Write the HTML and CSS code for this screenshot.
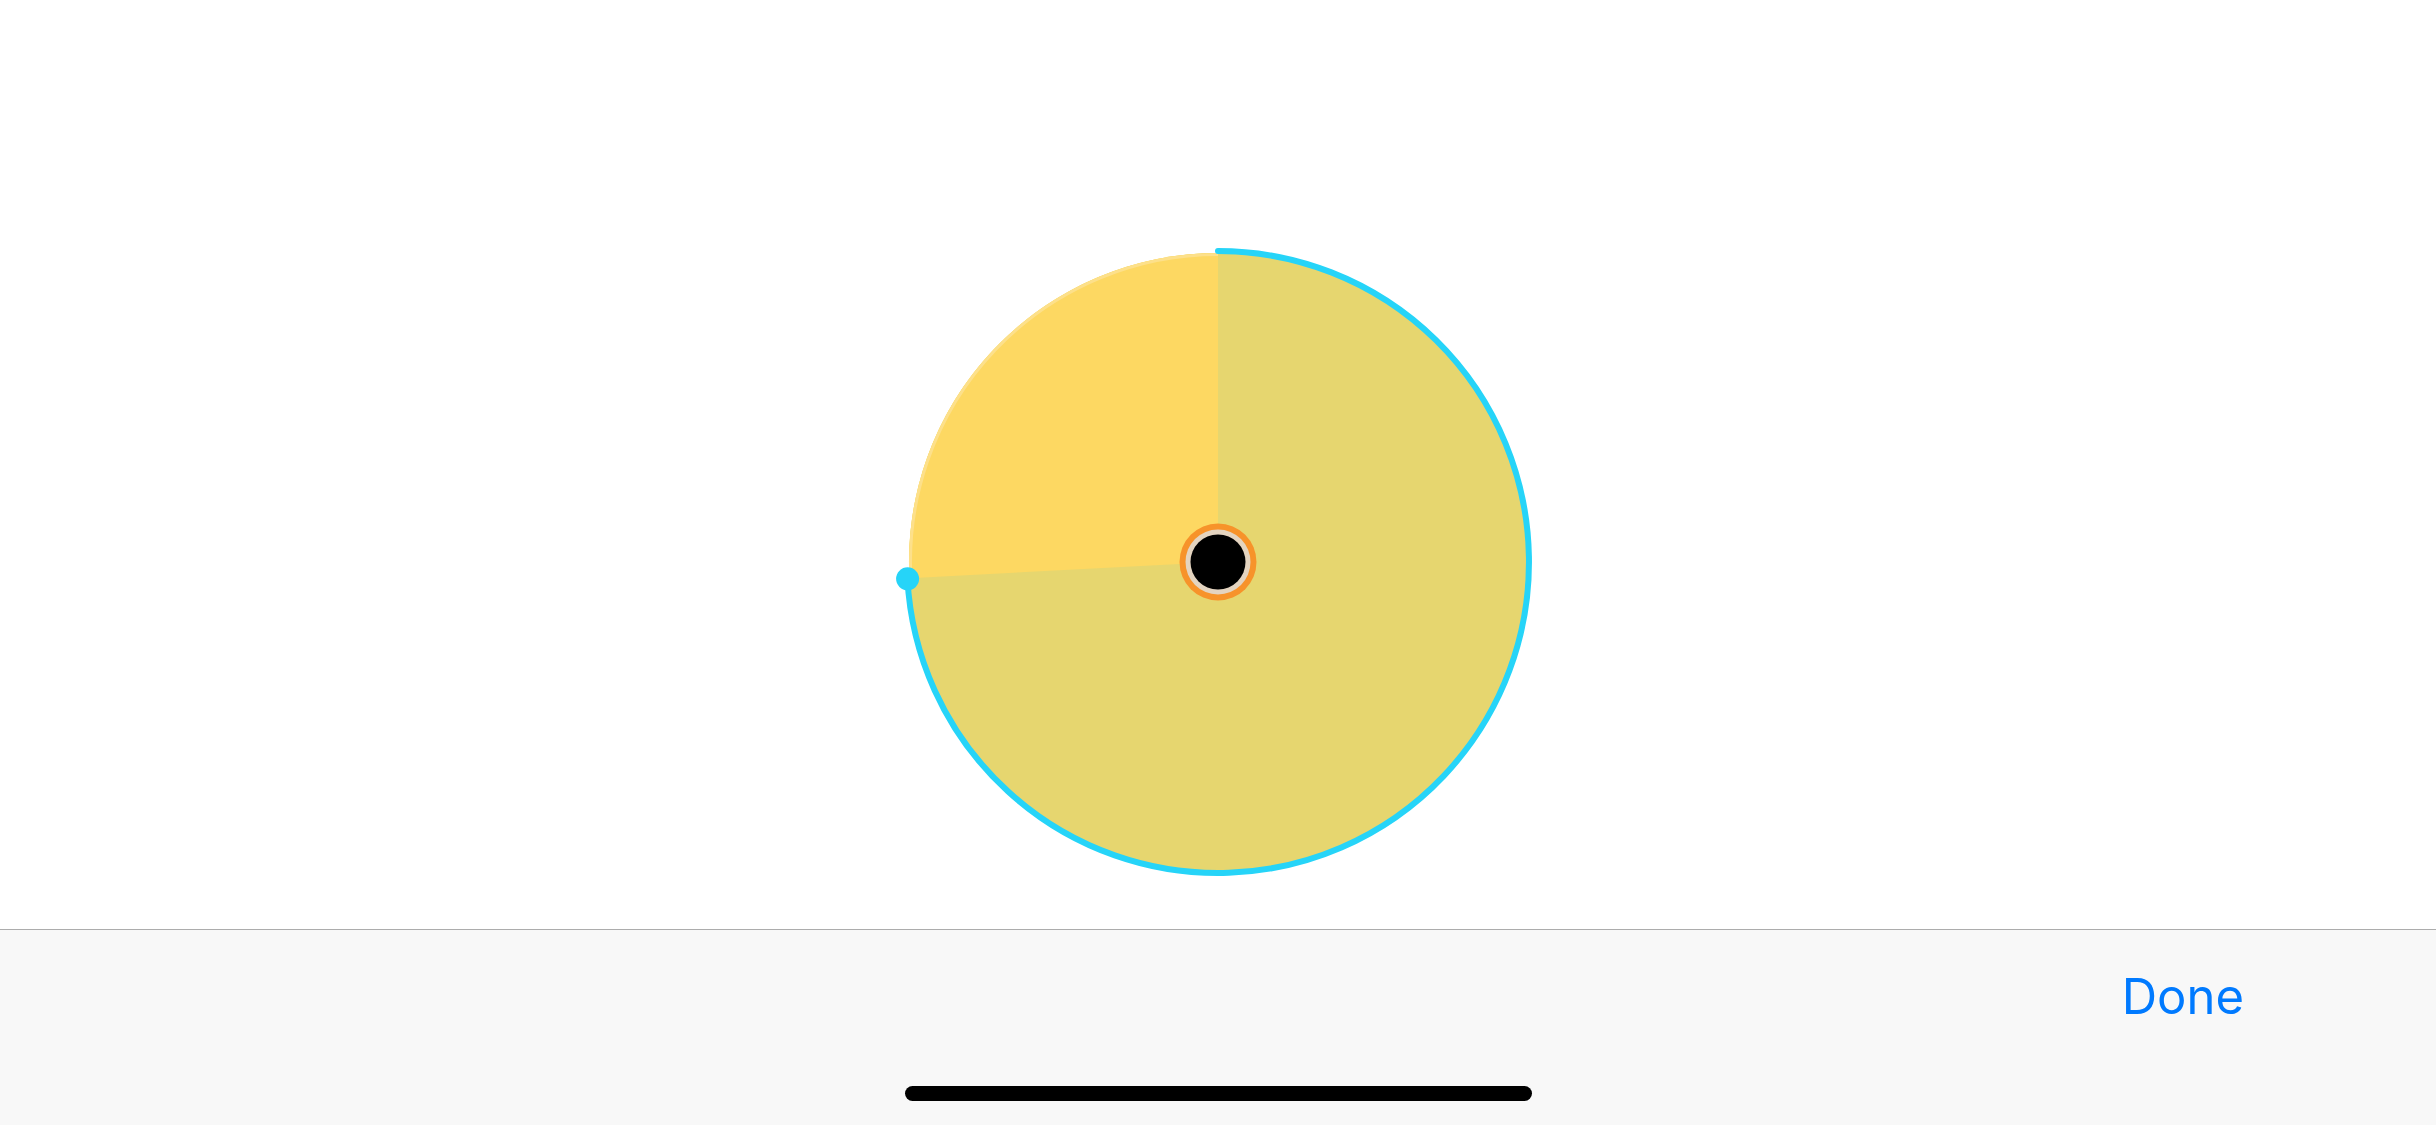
FILE: index.html
```html
<!DOCTYPE html>
<html lang="en">
<head>
  <meta charset="UTF-8">
  <meta name="viewport" content="width=device-width, initial-scale=1.0">
  <title>Pie</title>
  <link rel="stylesheet" href="styles.css">
</head>
<body>
  <div class="screen">
    <div class="content">
      <svg class="pie" width="680" height="680" viewBox="0 0 680 680">
        <circle cx="340" cy="340" r="309" fill="#e6d66f"/>
        <path d="M340 340 L340 31 A309 309 0 0 0 31.4 356.2 Z" fill="#fdd862"/>
        <path d="M340 32.5 A307.5 307.5 0 0 0 32.9 356.1" fill="none" stroke="#fde08a" stroke-width="3"/>
        <path d="M340 29 A311 311 0 1 1 29.4 356.3" fill="none" stroke="#26d4f8" stroke-width="6" stroke-linecap="round"/>
        <circle cx="29.6" cy="356.8" r="11.5" fill="#26d4f8"/>
        <circle cx="340" cy="340" r="38.5" fill="#f7932a"/>
        <circle cx="340" cy="340" r="32.5" fill="#e4d4c0"/>
        <circle cx="340" cy="340" r="27.5" fill="#000"/>
      </svg>
    </div>
    <div class="toolbar">
      <div class="toolbar-row">
        <button class="done">Done</button>
      </div>
      <div class="home-area">
        <div class="home-indicator"></div>
      </div>
    </div>
  </div>
</body>
</html>
```

FILE: styles.css
```css
html, body {
  margin: 0;
  padding: 0;
}
body {
  font-family: 'Inter', 'Liberation Sans', sans-serif;
  background: #fff;
  width: 2436px;
  height: 1125px;
  overflow: hidden;
}
.screen {
  display: flex;
  flex-direction: column;
  height: 1125px;
}
.content {
  height: 929px;
  display: flex;
  justify-content: center;
  align-items: flex-start;
  padding-top: 222px;
  box-sizing: border-box;
  background: #fff;
}
.pie {
  display: block;
}
.toolbar {
  flex: 1;
  background: #f8f8f8;
  border-top: 1px solid #acacac;
  display: flex;
  flex-direction: column;
}
.toolbar-row {
  height: 132px;
  display: flex;
  justify-content: flex-end;
  align-items: center;
  padding-right: 192px;
}
.done {
  font-family: 'Inter', 'Liberation Sans', sans-serif;
  font-size: 49px;
  color: #007aff;
  background: none;
  border: none;
  padding: 0;
  line-height: 1;
  cursor: pointer;
}
.home-area {
  flex: 1;
  display: flex;
  justify-content: center;
  padding-top: 24px;
}
.home-indicator {
  width: 627px;
  height: 15px;
  border-radius: 8px;
  background: #000;
}
```
